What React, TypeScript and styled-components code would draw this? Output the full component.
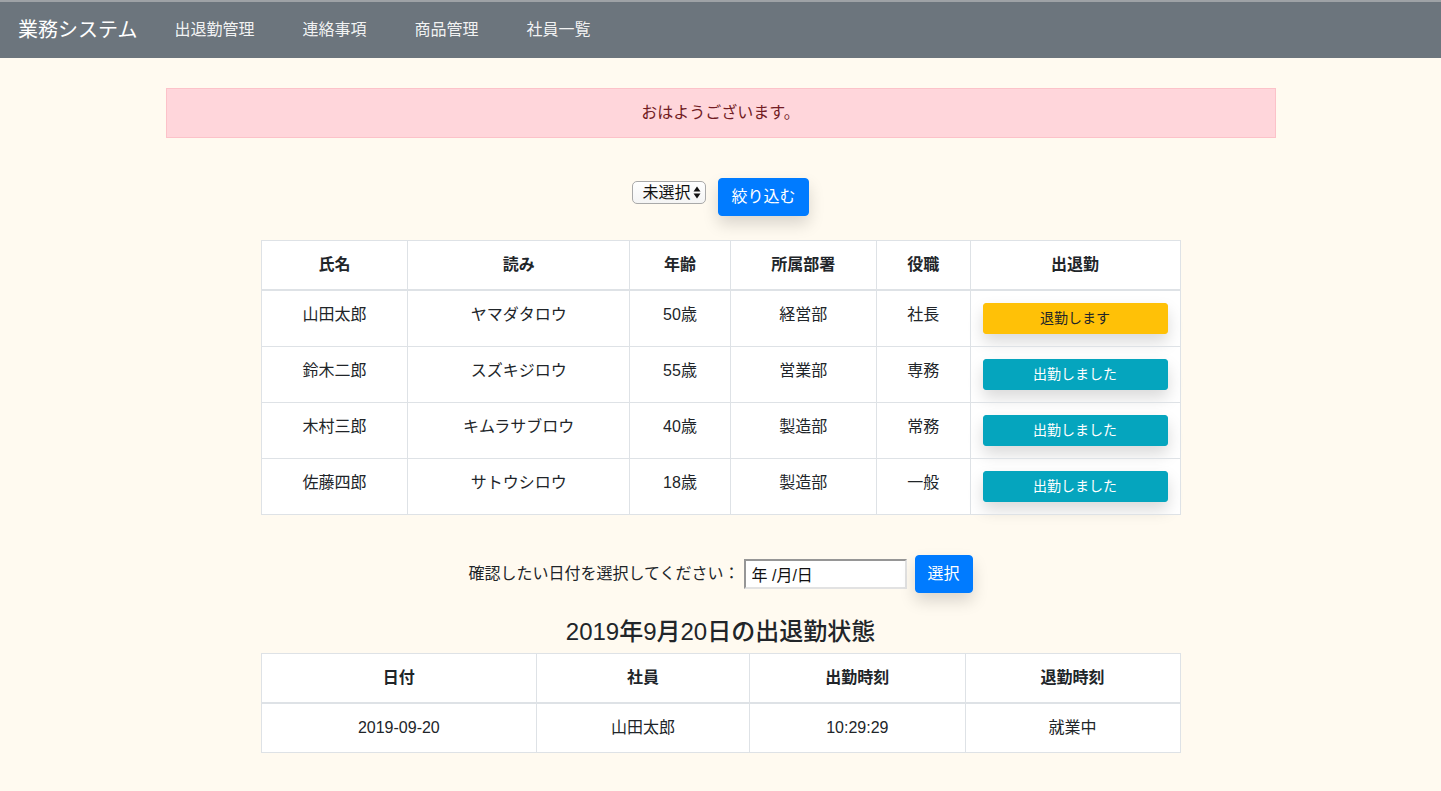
import React from "react";
import styled, { createGlobalStyle } from "styled-components";

const GlobalStyle = createGlobalStyle`
  html, body {
    margin: 0;
    padding: 0;
    background: #fffaf0;
  }
  body {
    font-family: "Liberation Sans", Arial, "Noto Sans CJK JP", sans-serif;
    font-size: 16px;
    line-height: 1.5;
    color: #212529;
  }
  * { box-sizing: border-box; }
`;

const NavBar = styled.nav`
  display: flex;
  align-items: center;
  height: 58px;
  border-top: 2px solid #9ea2a6;
  background: #6c757d;
  padding: 0 16px 0 18px;
`;

const Brand = styled.span`
  font-size: 20px;
  line-height: 30px;
  color: #ffffff;
  margin-right: 37px;
  white-space: nowrap;
`;

const NavList = styled.div`
  display: flex;
  gap: 48px;
`;

const NavLink = styled.a`
  font-size: 16px;
  color: rgba(255, 255, 255, 0.92);
  text-decoration: none;
  line-height: 24px;
`;

const Main = styled.main`
  width: 1110px;
  margin: 0 auto;
  padding-top: 30px;
  padding-bottom: 38px;
`;

const Alert = styled.div`
  background: #ffd6db;
  border: 1px solid #fcc2c9;
  color: #721c24;
  padding: 12px 20px;
  line-height: 24px;
  text-align: center;
`;

const FilterRow = styled.form`
  display: flex;
  justify-content: center;
  align-items: flex-start;
  gap: 12px;
  margin-top: 40px;
`;

const SelectWrap = styled.div`
  position: relative;
  display: inline-flex;
  margin-top: 3px;
`;

const Select = styled.select`
  appearance: none;
  -webkit-appearance: none;
  width: 74px;
  height: 23px;
  border: 1px solid #a9a9a9;
  border-radius: 5px;
  background: linear-gradient(#ffffff, #f4f4f4);
  font-family: inherit;
  font-size: 16px;
  line-height: 20px;
  padding: 0 0 0 9px;
  color: #111;
`;

const Arrows = styled.svg`
  position: absolute;
  right: 5px;
  top: 5px;
  pointer-events: none;
`;

const Button = styled.button<{ $variant?: "primary" | "warning" | "info"; $small?: boolean; $block?: boolean }>`
  font-family: inherit;
  border: 1px solid transparent;
  border-radius: ${(p) => (p.$small ? "3px" : "4px")};
  font-size: ${(p) => (p.$small ? "14px" : "16px")};
  line-height: ${(p) => (p.$small ? "21px" : "24px")};
  padding: ${(p) => (p.$small ? "4px 8px" : "6px 12px")};
  width: ${(p) => (p.$block ? "100%" : "auto")};
  display: ${(p) => (p.$block ? "block" : "inline-block")};
  cursor: pointer;
  box-shadow: 0 8px 16px rgba(0, 0, 0, 0.15);
  background: ${(p) =>
    p.$variant === "warning" ? "#ffc107" : p.$variant === "info" ? "#05a5be" : "#007bff"};
  border-color: ${(p) =>
    p.$variant === "warning" ? "#ffc107" : p.$variant === "info" ? "#05a5be" : "#007bff"};
  color: ${(p) => (p.$variant === "warning" ? "#212529" : "#ffffff")};
`;

const Table = styled.table<{ $top: number }>`
  width: 920px;
  margin: ${(p) => p.$top}px auto 0;
  border-collapse: collapse;
  background: #ffffff;
  text-align: center;
`;

const Th = styled.th<{ $w: number }>`
  width: ${(p) => p.$w}px;
  border: 1px solid #dee2e6;
  border-bottom: 2px solid #dee2e6;
  padding: 12px;
  font-weight: 700;
  line-height: 24px;
  vertical-align: bottom;
`;

const Td = styled.td`
  border: 1px solid #dee2e6;
  padding: 12px;
  line-height: 24px;
  vertical-align: top;
`;

const DateRow = styled.form`
  display: flex;
  justify-content: center;
  align-items: center;
  margin-top: 40px;
`;

const DateLabel = styled.label`
  font-size: 16px;
  margin-right: 4px;
`;

const DateInput = styled.input`
  width: 163px;
  height: 30px;
  font-family: inherit;
  font-size: 16px;
  padding: 0 6px;
  background: #ffffff;
  border-style: solid;
  border-width: 2px;
  border-color: #969696 #e2e2e2 #e2e2e2 #969696;
  margin-right: 8px;
  color: #111;
`;

const Heading = styled.h4`
  margin: 25px 0 6px;
  font-size: 24px;
  font-weight: 500;
  line-height: 1.2;
  text-align: center;
`;

const employees = [
  { name: "山田太郎", kana: "ヤマダタロウ", age: "50歳", dept: "経営部", role: "社長", status: "退勤します", variant: "warning" as const },
  { name: "鈴木二郎", kana: "スズキジロウ", age: "55歳", dept: "営業部", role: "専務", status: "出勤しました", variant: "info" as const },
  { name: "木村三郎", kana: "キムラサブロウ", age: "40歳", dept: "製造部", role: "常務", status: "出勤しました", variant: "info" as const },
  { name: "佐藤四郎", kana: "サトウシロウ", age: "18歳", dept: "製造部", role: "一般", status: "出勤しました", variant: "info" as const },
];

export default function App() {
  return (
    <>
      <GlobalStyle />
      <NavBar>
        <Brand>業務システム</Brand>
        <NavList>
          <NavLink href="#">出退勤管理</NavLink>
          <NavLink href="#">連絡事項</NavLink>
          <NavLink href="#">商品管理</NavLink>
          <NavLink href="#">社員一覧</NavLink>
        </NavList>
      </NavBar>
      <Main>
        <Alert>おはようございます。</Alert>
        <FilterRow onSubmit={(e) => e.preventDefault()}>
          <SelectWrap>
            <Select defaultValue="">
              <option value="">未選択</option>
              <option value="1">経営部</option>
              <option value="2">営業部</option>
              <option value="3">製造部</option>
            </Select>
            <Arrows width="8" height="13" viewBox="0 0 8 13">
              <path d="M4 0.5 L7.5 5.5 L0.5 5.5 Z" fill="#111" />
              <path d="M0.5 7.5 L7.5 7.5 L4 12.5 Z" fill="#111" />
            </Arrows>
          </SelectWrap>
          <Button type="submit" $variant="primary">絞り込む</Button>
        </FilterRow>
        <Table $top={24}>
          <thead>
            <tr>
              <Th $w={147}>氏名</Th>
              <Th $w={222}>読み</Th>
              <Th $w={101}>年齢</Th>
              <Th $w={146}>所属部署</Th>
              <Th $w={94}>役職</Th>
              <Th $w={210}>出退勤</Th>
            </tr>
          </thead>
          <tbody>
            {employees.map((e) => (
              <tr key={e.name}>
                <Td>{e.name}</Td>
                <Td>{e.kana}</Td>
                <Td>{e.age}</Td>
                <Td>{e.dept}</Td>
                <Td>{e.role}</Td>
                <Td>
                  <Button type="button" $variant={e.variant} $small $block>
                    {e.status}
                  </Button>
                </Td>
              </tr>
            ))}
          </tbody>
        </Table>
        <DateRow onSubmit={(e) => e.preventDefault()}>
          <DateLabel htmlFor="date">確認したい日付を選択してください：</DateLabel>
          <DateInput id="date" type="text" defaultValue="年 /月/日" />
          <Button type="submit" $variant="primary">選択</Button>
        </DateRow>
        <Heading>2019年9月20日の出退勤状態</Heading>
        <Table $top={0}>
          <thead>
            <tr>
              <Th $w={276}>日付</Th>
              <Th $w={213}>社員</Th>
              <Th $w={216}>出勤時刻</Th>
              <Th $w={215}>退勤時刻</Th>
            </tr>
          </thead>
          <tbody>
            <tr>
              <Td>2019-09-20</Td>
              <Td>山田太郎</Td>
              <Td>10:29:29</Td>
              <Td>就業中</Td>
            </tr>
          </tbody>
        </Table>
      </Main>
    </>
  );
}
